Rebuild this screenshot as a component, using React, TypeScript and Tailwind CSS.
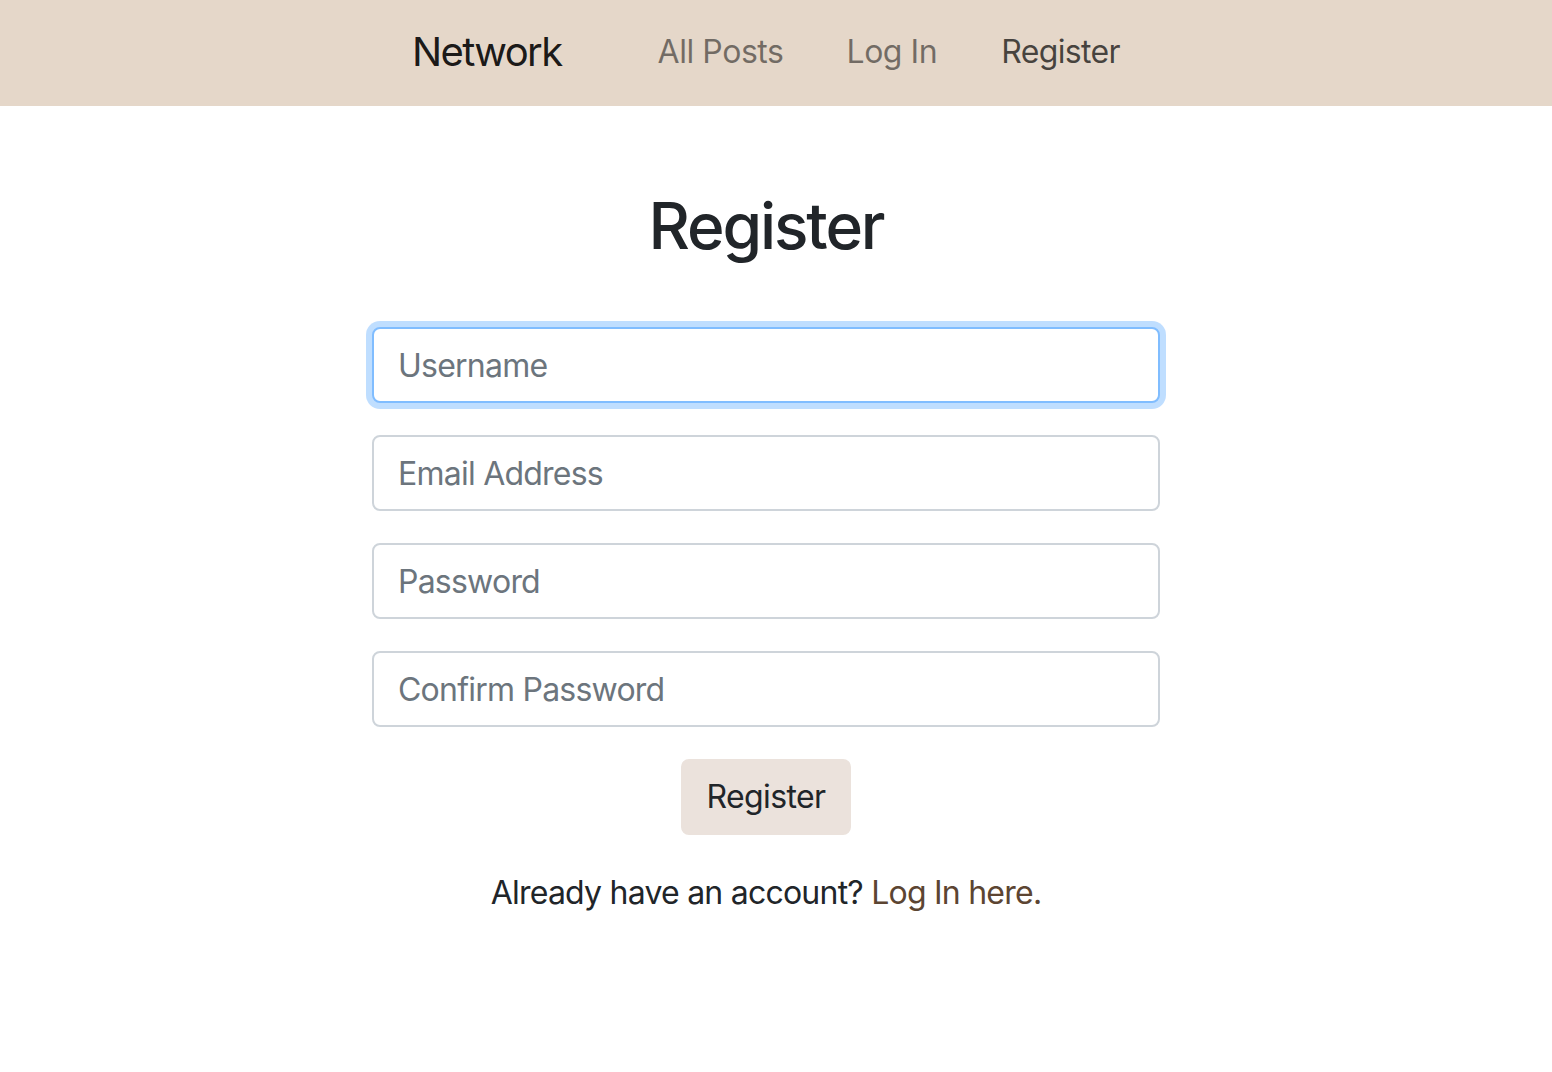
import React from "react";

export default function App() {
  const font = { fontFamily: "Inter, 'Noto Sans', sans-serif" };
  const inputBase =
    "h-[76px] w-full rounded-[8px] border-2 bg-white px-[24px] text-[32px] tracking-[-0.024em] text-[#495057] outline-none placeholder:text-[#6c757d]";
  return (
    <div className="min-h-[1072px] bg-white text-[#212529]" style={font}>
      <nav className="h-[106px] w-full bg-[#e5d7c9]">
        <div className="flex h-full items-center justify-center pl-[32px] pr-[20px] pb-[3px]">
          <a className="mr-[64px] text-[40px] leading-[60px] tracking-[-0.04em] text-[rgba(0,0,0,0.9)]" href="#">
            Network
          </a>
          <ul className="flex items-center">
            <li>
              <a className="block px-[32px] text-[32px] leading-[48px] tracking-[-0.014em] text-[rgba(0,0,0,0.5)]" href="#">
                All Posts
              </a>
            </li>
            <li>
              <a className="block pl-[31px] pr-[32px] text-[32px] leading-[48px] tracking-[-0.014em] text-[rgba(0,0,0,0.5)]" href="#">
                Log In
              </a>
            </li>
            <li>
              <a className="block px-[32px] text-[32px] leading-[48px] tracking-[-0.02em] text-[rgba(0,0,0,0.7)]" href="#">
                Register
              </a>
            </li>
          </ul>
        </div>
      </nav>

      <main className="flex flex-col items-center pr-[20px]">
        <h2 className="mt-[81px] text-[64px] font-medium leading-[77px] tracking-[-0.033em] text-[#212529]">Register</h2>

        <form className="mt-[63px] flex w-[788px] flex-col gap-[32px]" onSubmit={(e) => e.preventDefault()}>
          <input
            type="text"
            placeholder="Username"
            className={inputBase + " border-[#80bdff] shadow-[0_0_0_6px_rgba(0,123,255,0.25)]"}
            style={font}
          />
          <input type="email" placeholder="Email Address" className={inputBase + " border-[#ced4da]"} style={font} />
          <input type="password" placeholder="Password" className={inputBase + " border-[#ced4da]"} style={font} />
          <input type="password" placeholder="Confirm Password" className={inputBase + " border-[#ced4da]"} style={font} />
          <div className="flex justify-center">
            <button
              type="submit"
              className="h-[76px] rounded-[8px] border-2 border-[#ebe2dc] bg-[#ebe2dc] px-[24px] text-[32px] leading-[48px] tracking-[-0.02em] text-[#212529]"
              style={font}
            >
              Register
            </button>
          </div>
        </form>

        <p className="mt-[34px] text-[32px] leading-[48px] tracking-[-0.024em] text-[#212529]">
          Already have an account?{" "}
          <a href="#" className="text-[#5c4532]">
            Log In here.
          </a>
        </p>
      </main>
    </div>
  );
}
